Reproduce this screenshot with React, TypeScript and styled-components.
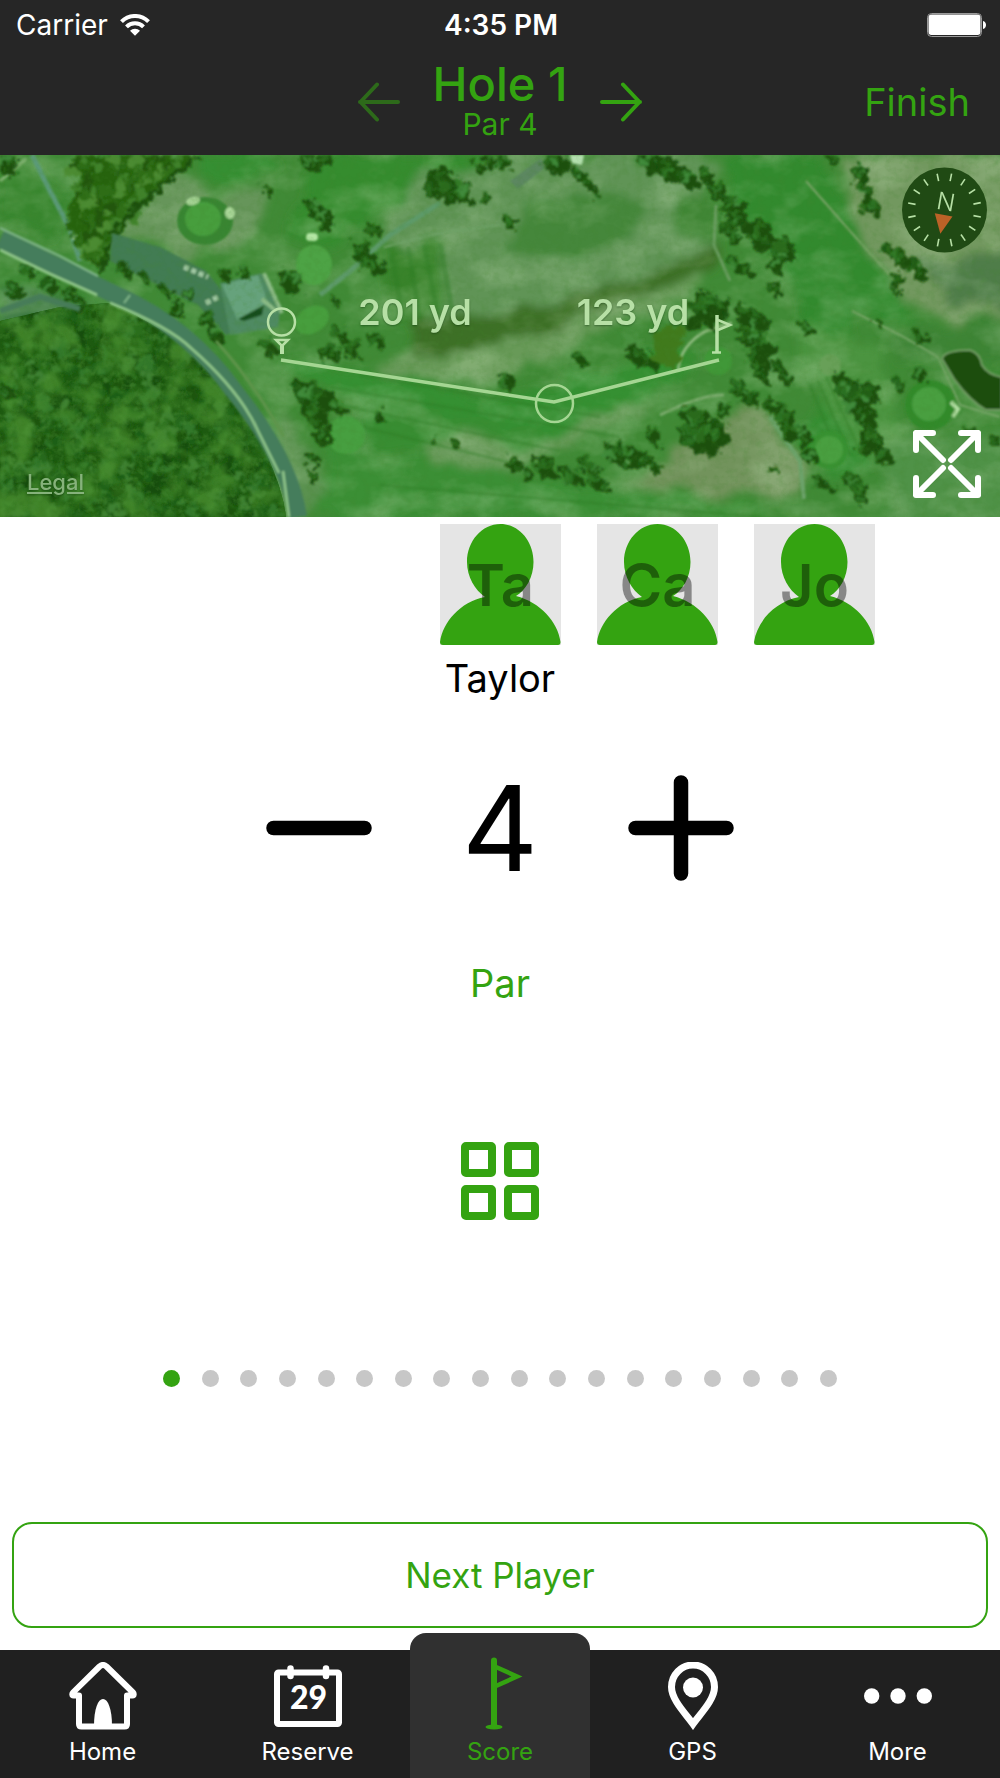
import React, { useState } from "react";
import styled, { createGlobalStyle } from "styled-components";

const GREEN = "#34a311";
const MARK = "#b7e0a6";

const GlobalStyle = createGlobalStyle`
  *, *::before, *::after { box-sizing: border-box; }
  body {
    margin: 0;
    background: #fff;
    font-family: Inter, "Liberation Sans", sans-serif;
    -webkit-font-smoothing: antialiased;
  }
  button {
    margin: 0;
    padding: 0;
    border: 0;
    background: none;
    font: inherit;
    color: inherit;
    cursor: pointer;
  }
  svg { display: block; }
`;

const Page = styled.div`
  display: flex;
  flex-direction: column;
  min-height: 100vh;
`;

const Header = styled.header`
  background: #262626;
  height: 155px;
`;

const StatusBar = styled.div`
  display: grid;
  grid-template-columns: 1fr auto 1fr;
  align-items: center;
  height: 50px;
  padding: 0 14px 0 16px;
  color: #fff;
  font-size: 28px;
  line-height: 36px;
`;

const Carrier = styled.div`
  display: flex;
  align-items: center;
  gap: 12px;
`;

const Clock = styled.time`
  font-weight: 600;
`;

const BatterySlot = styled.div`
  justify-self: end;
`;

const NavBar = styled.div`
  display: grid;
  grid-template-columns: 1fr auto 1fr;
  align-items: center;
  height: 104px;
  padding: 0 30px;
  color: ${GREEN};
`;

const HoleNav = styled.div`
  grid-column: 2;
  display: flex;
  align-items: center;
  gap: 32px;
`;

const HoleTitle = styled.div`
  display: flex;
  flex-direction: column;
  align-items: center;
  width: 136px;
`;

const HoleName = styled.h1`
  margin: 0;
  font-size: 47px;
  font-weight: 500;
  line-height: 44px;
  white-space: nowrap;
`;

const HolePar = styled.p`
  margin: 0;
  font-size: 30px;
  line-height: 36px;
`;

const ArrowButton = styled.button`
  &:disabled { opacity: 0.55; cursor: default; }
`;

const FinishButton = styled.button`
  justify-self: end;
  font-size: 38px;
  line-height: 48px;
`;

const MapPanel = styled.section`
  position: relative;
  height: 362px;
  overflow: hidden;
  background: #3f8434;
  > svg { width: 100%; height: 100%; }
`;

const LegalLink = styled.a`
  position: absolute;
  left: 27px;
  bottom: 21px;
  color: #86b27b;
  font-size: 22px;
  font-weight: 500;
  line-height: 28px;
  text-shadow: 0 1px 2px rgba(0, 40, 0, 0.4);
`;

const ExpandButton = styled.button`
  position: absolute;
  right: 19px;
  bottom: 19px;
`;

const Main = styled.main`
  flex: 1;
  display: flex;
  flex-direction: column;
  align-items: center;
`;

const Players = styled.div`
  align-self: stretch;
  display: flex;
  gap: 36px;
  padding: 7px 0 0 calc(50% - 60px);
  overflow: hidden;
`;

const PlayerTile = styled.button`
  display: grid;
  place-items: center;
  flex: none;
  width: 121px;
  height: 121px;
  background: #e5e5e5;
  > * { grid-area: 1 / 1; }
`;

const Initials = styled.span`
  color: rgba(0, 0, 0, 0.41);
  font-size: 58px;
  font-weight: 600;
  line-height: 72px;
`;

const PlayerName = styled.h2`
  margin: 9px 0 0;
  font-size: 38px;
  font-weight: 400;
  line-height: 48px;
  color: #000;
`;

const Stepper = styled.div`
  display: flex;
  align-items: center;
  justify-content: space-between;
  width: 468px;
  height: 144px;
  margin-top: 54px;
`;

const Score = styled.output`
  font-size: 118px;
  line-height: 144px;
  color: #000;
`;

const Result = styled.p`
  margin: 59px 0 0;
  color: ${GREEN};
  font-size: 38px;
  line-height: 48px;
`;

const GridButton = styled.button`
  display: grid;
  grid-template-columns: repeat(2, 35px);
  gap: 8px;
  margin-top: 135px;
`;

const GridCell = styled.span`
  height: 35px;
  border: 8px solid ${GREEN};
  border-radius: 5px;
`;

const Dots = styled.div`
  display: flex;
  justify-content: space-between;
  width: 674px;
  max-width: 90%;
  margin-top: 150px;
`;

const Dot = styled.button<{ $on: boolean }>`
  width: 17px;
  height: 17px;
  border-radius: 50%;
  background: ${(p) => (p.$on ? GREEN : "#c7c7c7")};
`;

const NextArea = styled.div`
  align-self: stretch;
  margin-top: auto;
  padding: 0 12px 22px;
`;

const NextButton = styled.button`
  width: 100%;
  height: 106px;
  border: 2px solid ${GREEN};
  border-radius: 20px;
  color: ${GREEN};
  font-size: 35px;
  line-height: 44px;
`;

const TabBar = styled.nav`
  display: flex;
  height: 128px;
  background: #202020;
  color: #fff;
`;

const Tab = styled.a<{ $active?: boolean }>`
  display: flex;
  flex-direction: column;
  align-items: center;
  justify-content: flex-end;
  flex: ${(p) => (p.$active ? "0 0 180px" : "1 1 0")};
  gap: 8px;
  margin-top: ${(p) => (p.$active ? "-17px" : "0")};
  padding-bottom: 12px;
  border-radius: ${(p) => (p.$active ? "16px 16px 0 0" : "0")};
  background: ${(p) => (p.$active ? "#303030" : "transparent")};
  color: ${(p) => (p.$active ? GREEN : "#fff")};
  font-size: 24px;
  line-height: 28px;
  text-decoration: none;
`;

const WifiIcon = () => (
  <svg width="30" height="22" viewBox="0 0 30 22" aria-hidden="true">
    <g fill="none" stroke="#fff" strokeWidth="4">
      <path d="M1.5 7.6a19 19 0 0 1 27 0" />
      <path d="M6.5 12.8a12 12 0 0 1 17 0" />
    </g>
    <path d="M10 16.8a7 7 0 0 1 10 0l-5 5z" fill="#fff" />
  </svg>
);

const BatteryIcon = () => (
  <svg width="59" height="24" viewBox="0 0 59 24" aria-label="Battery full">
    <rect x="0.5" y="0.5" width="54" height="23" rx="4" fill="none" stroke="#9a9a9a" />
    <rect x="1.500" y="1.500" width="52" height="20.500" rx="3" fill="#fff" />
    <path d="M56 8c4 1 4 7 0 8z" fill="#fff" />
  </svg>
);

const Arrow = ({ left }: { left?: boolean }) => (
  <svg width="42" height="40" viewBox="0 0 42 40" aria-hidden="true">
    <path
      d={left ? "M40 20H2M19 2.5L2.5 20L19 37.5" : "M2 20H40M23 2.5L39.500 20L23 37.5"}
      fill="none"
      stroke={GREEN}
      strokeWidth="4"
      strokeLinecap="round"
      strokeLinejoin="round"
    />
  </svg>
);

const Person = () => (
  <svg width="121" height="121" viewBox="0 0 121 121" aria-hidden="true">
    <path
      fill={GREEN}
      d="M60.500 0C79 0 93.500 17 93.500 38C93.500 53 86 66 76 72C100 78 118 98 120.500 118Q120.500 121 118 121H3Q0 121 0 118C3 98 20 78 45 73C35 66 27 53 27 38C27 17 42 0 60.500 0Z"
    />
  </svg>
);

const StepIcon = ({ plus }: { plus?: boolean }) => (
  <svg width="106" height="106" viewBox="0 0 106 106" aria-hidden="true">
    <path
      d={plus ? "M7.500 53H98.500M53 7.500V98.500" : "M7.500 53H98.500"}
      stroke="#000"
      strokeWidth="14.500"
      strokeLinecap="round"
    />
  </svg>
);

const ExpandIcon = () => (
  <svg width="68" height="68" viewBox="0 0 68 68" aria-hidden="true">
    <g fill="none" stroke="#fff" strokeWidth="6" strokeLinecap="round" strokeLinejoin="round">
      <path d="M3 20V3H20M3 3L30 30" />
      <path d="M48 3H65V20M65 3L38 30" />
      <path d="M3 48V65H20M3 65L30 38" />
      <path d="M48 65H65V48M65 65L38 38" />
    </g>
  </svg>
);

const HomeIcon = () => (
  <svg width="68" height="68" viewBox="0 0 68 68" aria-hidden="true">
    <path
      d="M10 33.500H4.500C3 33.500 3 31.500 4 30.500L30.500 4.500Q34 1.500 37.500 4.500L64 30.500C65 31.500 65 33.500 63.500 33.500H58V62Q58 64.500 55.500 64.500H12.500Q10 64.500 10 62Z"
      fill="none"
      stroke="#fff"
      strokeWidth="6"
      strokeLinejoin="round"
    />
    <path d="M25 64C25 47 29 37 34 37S43 47 43 64Z" fill="#fff" />
  </svg>
);

const CalendarIcon = () => (
  <svg width="68" height="68" viewBox="0 0 68 68" aria-hidden="true">
    <rect x="3" y="10.500" width="62" height="51.500" rx="1.500" fill="none" stroke="#fff" strokeWidth="6" />
    <path d="M16.500 6.500V14M52 6.500V14" stroke="#fff" strokeWidth="6.500" strokeLinecap="round" />
    <text
      x="34.500"
      y="47"
      textAnchor="middle"
      fill="#fff"
      fontFamily="Lato, sans-serif"
      fontSize="32"
      fontWeight="900"
    >
      29
    </text>
  </svg>
);

const FlagIcon = () => (
  <svg width="68" height="74" viewBox="0 0 68 74" aria-hidden="true">
    <ellipse cx="28" cy="71" rx="8.500" ry="2.500" fill={GREEN} />
    <path d="M28 4.500V70" stroke={GREEN} strokeWidth="6" strokeLinecap="round" />
    <path d="M30 11L51 20.500L30 30" fill="none" stroke={GREEN} strokeWidth="4.500" />
  </svg>
);

const PinIcon = () => (
  <svg width="68" height="68" viewBox="0 0 68 68" aria-hidden="true">
    <path
      d="M34 62C27 52 12.500 38 12.500 25A21.500 22 0 0 1 55.500 25C55.500 38 41 52 34 62Z"
      fill="none"
      stroke="#fff"
      strokeWidth="7"
    />
    <circle cx="34" cy="25.500" r="10" fill="#fff" />
  </svg>
);

const MoreIcon = () => (
  <svg width="68" height="68" viewBox="0 0 68 68" aria-hidden="true">
    <g fill="#fff">
      <circle cx="7.700" cy="34" r="7.700" />
      <circle cx="34" cy="34" r="7.700" />
      <circle cx="60.300" cy="34" r="7.700" />
    </g>
  </svg>
);

/* Small deterministic generator, so the tree canopy is the same on every render. */
const makeRandom = (seed: number) => () => {
  seed = (seed * 16807) % 2147483647;
  return seed / 2147483647;
};

type Blob = { x: number; y: number; r: number; c: string };

const rand = makeRandom(4127);
const canopy = ["#1f5f12", "#2a6e1a", "#1a540e", "#33782a", "#26681a", "#3c8030", "#184d0c"];
const woods: Blob[] = Array.from({ length: 1300 }, () => ({
  x: rand() * 300,
  y: 130 + rand() * 236,
  r: 2 + rand() * 5,
  c: canopy[Math.floor(rand() * canopy.length)],
}));
const grove: Blob[] = Array.from({ length: 260 }, () => ({
  x: 55 + rand() * 145,
  y: rand() * 120,
  r: 2 + rand() * 5,
  c: ["#2d6d18", "#3f822b", "#22570f", "#4c8b31"][Math.floor(rand() * 4)],
}));

/* Single trees and clumps: centre, and radius of the clump. */
const clumps: [number, number, number][] = [
  [8, 10, 10], [312, 8, 9], [326, 4, 7], [268, 34, 6], [314, 54, 10], [324, 64, 10], [432, 34, 9], [446, 30, 16],
  [461, 38, 12], [374, 76, 7], [362, 96, 9], [372, 110, 11], [290, 126, 11], [336, 149, 4], [340, 178, 8],
  [328, 198, 8], [352, 193, 9], [336, 199, 8], [378, 186, 8], [268, 192, 8], [478, 14, 7], [490, 8, 7],
  [504, 6, 8], [510, 68, 7], [486, 46, 5], [556, 8, 12], [578, 18, 8], [588, 28, 7], [595, 38, 4], [650, 8, 12],
  [668, 14, 13], [688, 24, 11], [707, 22, 7], [718, 38, 9], [732, 52, 13], [738, 64, 11], [727, 72, 7],
  [734, 82, 7], [738, 112, 9], [748, 116, 6], [762, 82, 15], [782, 94, 12], [777, 110, 9], [775, 134, 6],
  [710, 150, 14], [700, 156, 10], [720, 148, 9], [636, 200, 10], [648, 206, 9], [578, 202, 7], [586, 210, 5],
  [744, 160, 10], [756, 166, 12], [750, 182, 12], [764, 192, 10], [758, 206, 11], [762, 220, 8],
  [740, 236, 10], [750, 242, 8], [779, 214, 8], [786, 224, 6], [724, 254, 6], [695, 268, 15], [702, 282, 18],
  [716, 276, 13], [690, 282, 12], [306, 240, 14], [320, 244, 14], [316, 262, 13], [338, 252, 8], [322, 282, 8],
  [379, 260, 6], [312, 304, 7], [312, 320, 5], [434, 284, 4], [456, 290, 5], [5, 234, 9], [506, 228, 7],
  [651, 280, 7], [658, 290, 4], [616, 298, 11], [632, 302, 11], [646, 306, 8], [654, 314, 5], [514, 308, 7],
  [528, 320, 7], [546, 312, 10], [572, 322, 11], [588, 312, 9], [598, 326, 10], [606, 332, 6],
  [772, 252, 8], [784, 262, 10], [790, 276, 9], [802, 280, 9], [810, 302, 8], [820, 326, 7], [832, 332, 5],
  [850, 326, 8], [858, 336, 10], [864, 344, 6], [846, 232, 14], [858, 246, 15], [870, 238, 10], [866, 264, 10],
  [872, 284, 11], [884, 302, 9], [864, 294, 7], [806, 172, 6], [920, 182, 7], [878, 170, 4],
  [900, 232, 7], [920, 220, 8], [832, 4, 6], [860, 20, 9], [866, 36, 8], [872, 52, 9], [888, 94, 6],
  [900, 104, 10], [918, 116, 9], [898, 124, 6], [896, 134, 4], [968, 276, 6], [995, 286, 7], [776, 316, 3],
  [14, 134, 8], [28, 116, 7], [50, 130, 9], [70, 140, 8], [80, 148, 7], [224, 120, 7], [244, 118, 7],
  [206, 164, 8], [216, 180, 8], [178, 154, 8], [190, 140, 6], [166, 136, 6], [146, 124, 7], [124, 114, 8],
];
const leafColors = ["#2a6b1c", "#205d14", "#337a28", "#3f8a3a", "#2c6f20"];
const leaves: Blob[] = clumps.flatMap(([x, y, r]) =>
  Array.from({ length: 9 }, () => {
    const a = rand() * Math.PI * 2;
    const d = rand() * r * 0.75;
    return {
      x: x - r * 0.25 + Math.cos(a) * d,
      y: y - r * 0.25 + Math.sin(a) * d,
      r: r * (0.14 + rand() * 0.2),
      c: leafColors[Math.floor(rand() * leafColors.length)],
    };
  }),
);

const Blobs = ({ items }: { items: Blob[] }) => (
  <>
    {items.map((b, i) => (
      <circle key={i} cx={b.x.toFixed(1)} cy={b.y.toFixed(1)} r={b.r.toFixed(1)} fill={b.c} />
    ))}
  </>
);

const Shadows = () => (
  <g fill="#1a4f0c">
    {clumps.map(([x, y, r], i) => (
      <ellipse
        key={i}
        cx={x}
        cy={y}
        rx={(r * 1.25).toFixed(1)}
        ry={(r * 0.8).toFixed(1)}
        transform={`rotate(48 ${x} ${y})`}
      />
    ))}
  </g>
);

const Terrain = () => (
  <>
    <defs>
      <filter id="soft" x="-10%" y="-10%" width="120%" height="120%">
        <feTurbulence type="fractalNoise" baseFrequency="0.03" numOctaves="3" seed="5" result="n" />
        <feDisplacementMap in="SourceGraphic" in2="n" scale="30" xChannelSelector="R" yChannelSelector="G" />
        <feGaussianBlur stdDeviation="4" />
      </filter>
      <filter id="edge">
        <feGaussianBlur stdDeviation="0.8" />
      </filter>
      <filter id="ragged" x="0" y="0" width="100%" height="100%" filterUnits="userSpaceOnUse">
        <feTurbulence type="fractalNoise" baseFrequency="0.11" numOctaves="3" seed="11" result="n" />
        <feDisplacementMap in="SourceGraphic" in2="n" scale="18" xChannelSelector="R" yChannelSelector="G" />
        <feGaussianBlur stdDeviation="0.9" />
      </filter>
      <filter id="mottle" x="0" y="0" width="100%" height="100%">
        <feTurbulence type="fractalNoise" baseFrequency="0.02 0.03" numOctaves="4" seed="8" />
        <feColorMatrix values="0 0 0 0 0.5  0 0 0 0 0.68  0 0 0 0 0.42  2.4 0 0 0 -1" />
      </filter>
      <filter id="shade" x="0" y="0" width="100%" height="100%">
        <feTurbulence type="fractalNoise" baseFrequency="0.03" numOctaves="3" seed="21" />
        <feColorMatrix values="0 0 0 0 0.07  0 0 0 0 0.28  0 0 0 0 0.03  0 3.600 0 0 -1.500" />
      </filter>
      <filter id="grain" x="0" y="0" width="100%" height="100%">
        <feTurbulence type="fractalNoise" baseFrequency="0.14" numOctaves="3" seed="3" />
        <feColorMatrix values="0 0 0 0 0.06  0 0 0 0 0.24  0 0 0 0 0.03  0 2.2 0 0 -1" />
      </filter>
      <clipPath id="woodsClip">
        <path d="M0 166L60 152L108 148Q170 174 196 204Q240 246 262 290Q282 330 286 362H0Z" />
      </clipPath>
    </defs>

    <rect width="1000" height="362" fill="#408a36" />

    <g filter="url(#soft)">
      <path d="M200 0L202 20L240 30L290 0Z" fill="#358f30" />
      <path d="M178 10L200 26L210 44L270 28L262 66L240 92L180 100L150 86L118 80L134 50Z" fill="#66955a" />
      <path d="M0 0H30L70 46L60 80L0 66Z" fill="#39862e" />
      <path d="M330 0H490L440 24L380 56L330 92L290 80L300 40Z" fill="#358c2e" />
      <path d="M380 80L420 20L520 0H720L690 60L720 96L640 134L540 166L430 166L390 120Z" fill="#619457" />
      <path d="M520 50L620 36L650 60L630 86L560 106L500 96Z" fill="#44873a" />
      <path d="M680 40L716 50L712 84L676 78Z" fill="#3f8634" />
      <path d="M380 96L440 84L452 156L400 166Z" fill="#39832c" />
      <path d="M380 204L500 186L640 140L700 118L690 150L640 160L560 200L480 228L400 222Z" fill="#679a58" />
      <path d="M420 164Q600 150 722 84L716 110Q600 160 520 188L410 206Z" fill="#3c7026" />
      <path d="M282 204L380 214L500 244L660 194L700 200L650 240L560 278L470 290L300 220Z" fill="#359030" />
      <path d="M340 240L560 280L500 320L370 290Z" fill="#378d30" />
      <path d="M420 290L460 272L520 296L600 258L660 250L560 292L500 320L440 316Z" fill="#6b9b5c" />
      <path d="M330 290L560 330L700 346L800 362H310Z" fill="#3b8f34" />
      <path d="M670 300L736 252L764 258L806 306L800 338L700 342L620 326Z" fill="#72935c" />
      <path d="M716 0H820L850 60L890 110L920 170L860 160L840 210L800 180L790 120L740 60Z" fill="#328a2d" />
      <path d="M840 0H1010V170L940 160L890 130L856 80Z" fill="#72985f" />
      <path d="M920 106L1010 96V156L950 146Z" fill="#4f7d4a" />
      <path d="M880 176L1010 160V206L960 210L900 206Z" fill="#3c8435" />
      <path d="M800 170L850 180L880 200L900 290L860 300L830 250L800 220Z" fill="#4b9440" />
      <path d="M820 240L850 270L870 310L830 330L800 290Z" fill="#358e30" />
      <path d="M890 290L1010 280V370H880Z" fill="#4f9247" />
      <path d="M280 250L330 340L300 362H280Z" fill="#5a9150" />
      <path d="M0 130L60 140L100 150L0 180Z" fill="#3d7a42" />
    </g>

    <rect width="1000" height="362" filter="url(#mottle)" opacity="0.3" />

    <g stroke="#2b7a21" strokeWidth="5" opacity="0.35" filter="url(#edge)">
      <path d="M392 98L402 162M408 92L420 164M424 90L438 160M440 88L452 154" />
      <path d="M340 250L560 296M346 268L520 310M360 220L600 262M330 232L620 282M380 330L760 362" strokeWidth="3" />
      <path d="M810 230L838 300M818 226L850 300M826 222L862 300" strokeWidth="3" />
    </g>

    <g filter="url(#edge)" fill="none">
      <path d="M32 0L50 36L70 74L80 106" stroke="#5c9a78" strokeWidth="5" />
      <path d="M72 84L92 74M0 26L26 4" stroke="#86b677" strokeWidth="3" />
      <path d="M320 140L350 116L390 80L440 48" stroke="#5d9a69" strokeWidth="5" />
      <path d="M384 92L440 78L500 70" stroke="#6ea267" strokeWidth="2" />
      <path d="M806 26L850 76L890 120" stroke="#79a468" strokeWidth="2" />
      <path d="M852 156L900 180L938 202L960 250L1000 262" stroke="#75a466" strokeWidth="2" />
      <path d="M716 50L714 90L730 126" stroke="#6a9d61" strokeWidth="3" />
      <path d="M678 216Q680 190 706 176L732 168" stroke="#8cb97d" strokeWidth="3" />
      <path d="M660 260Q700 240 724 240" stroke="#7cac6e" strokeWidth="3" />
      <path d="M770 262L800 306L804 344" stroke="#6ca36a" strokeWidth="4" />
    </g>

    <g filter="url(#ragged)">
      <path d="M72 0H198L170 22L132 50L112 84L100 114L80 98L66 70L76 30Z" fill="#27640f" />
      <Blobs items={grove.filter((b) => b.x + b.y * 0.85 < 190 && b.x > 68 + b.y * 0.15)} />
      <path d="M196 2L152 40L128 58L112 88L100 120" fill="none" stroke="#1a4f0c" strokeWidth="6" />
    </g>
    <g clipPath="url(#woodsClip)">
      <rect y="130" width="300" height="232" fill="#1d5a10" />
      <g filter="url(#ragged)">
        <Blobs items={woods} />
      </g>
      <rect y="130" width="300" height="232" filter="url(#shade)" opacity="0.75" />
      <rect y="130" width="300" height="232" filter="url(#grain)" opacity="0.5" />
    </g>

    <g filter="url(#edge)">
      <path d="M112 78L160 92L206 116L222 136L248 172L226 180L198 150L110 106Z" fill="#437b52" />
      <path d="M220 128L262 118L280 156L278 172L230 180Z" fill="#4f8a62" />
      <path d="M222 130L258 120L268 148L238 166Z" fill="#66a27c" />
      <path d="M238 164L264 150L262 160L244 166Z" fill="#194d1b" />
      <path d="M264 118L282 158M262 144L276 156" stroke="#8cbb86" strokeWidth="4" />
      <path d="M184 112L208 122M206 148L218 142" stroke="#a2c9a4" strokeWidth="5" strokeDasharray="5 3" />
      <path d="M510 26L540 4L548 10L518 34Z" fill="#5b8760" />
      <path d="M570 0H584L582 10L572 8Z" fill="#b3dfae" />
    </g>

    <g filter="url(#edge)">
      <ellipse cx="205" cy="66" rx="28" ry="24" fill="#388530" />
      <ellipse cx="203" cy="64" rx="18" ry="17" fill="#479e3e" />
      <ellipse cx="193" cy="46" rx="7" ry="4" fill="#abd89a" transform="rotate(-15 193 46)" />
      <ellipse cx="230" cy="58" rx="5" ry="6" fill="#abd89a" />
      <rect x="306" y="78" width="12" height="8" rx="4" fill="#b4e6a4" />
      <ellipse cx="314" cy="110" rx="18" ry="20" fill="#4da344" />
      <ellipse cx="312" cy="165" rx="18" ry="13" fill="#469e3e" transform="rotate(-30 312 165)" />
      <circle cx="346" cy="280" r="19" fill="#479f40" />
      <circle cx="718" cy="206" r="14" fill="#409838" />
      <circle cx="829" cy="295" r="19" fill="#379230" />
      <circle cx="829" cy="295" r="14" fill="#489f40" />
      <circle cx="930" cy="250" r="25" fill="#328a2b" />
      <circle cx="929" cy="249" r="17" fill="#489f41" />
      <circle cx="830" cy="210" r="11" fill="#68a058" />
      <path d="M951 247L958 254L953 262" fill="none" stroke="#b0dca0" strokeWidth="4" />
    </g>

    {/* the noise averages one half, so the displaced layers keep their place */}
    <g filter="url(#ragged)">
      <circle cx="630" cy="186" r="10" fill="#4a9140" />
      <path d="M652 176L686 168L676 214L656 208Z" fill="#3f7a1b" />
      <path d="M690 160Q700 140 720 138Q732 146 726 166Q710 176 688 174Z" fill="#1a4f0c" />
      <Shadows />
      <Blobs items={leaves} />
    </g>

    <rect width="1000" height="362" filter="url(#grain)" opacity="0.22" />

    <g filter="url(#edge)" fill="none">
      <path
        d="M942 204Q944 195 970 195Q980 198 982 210Q988 220 1002 222V255H986Q970 246 954 224Z"
        fill="#1a4e0a"
        stroke="#719c63"
        strokeWidth="2"
      />
      <path d="M0 84L50 108L120 142Q190 174 234 236Q290 306 298 362" stroke="#457d5b" strokeWidth="18" />
      <path d="M0 73L60 101L98 121" stroke="#80b58b" strokeWidth="2" />
      <path
        d="M0 95L50 119L97 140M110 148Q170 172 192 194Q240 236 258 276L279 318M283 316L289 362"
        stroke="#91c78b"
        strokeWidth="2.500"
      />
      <path d="M216 186Q254 228 284 282" stroke="#5f944c" strokeWidth="3" />
      <path d="M0 156L40 142L80 154" stroke="#477b58" strokeWidth="6" />
      <path d="M124 148L130 140" stroke="#82b78a" strokeWidth="2" />
    </g>
  </>
);

const Compass = () => (
  <g transform="translate(944.500 55)">
    <circle r="42.500" fill="#204a14" />
    <g stroke={MARK} strokeWidth="1.600">
      {Array.from({ length: 16 }, (_, i) => (
        <path key={i} d="M0 -37V-29.500" transform={`rotate(${i * 22.5 + 11})`} />
      ))}
    </g>
    <g transform="rotate(10)">
      <text x="0" y="0" textAnchor="middle" fill={MARK} fontFamily="Inter, sans-serif" fontSize="24" fontWeight="300">
        N
      </text>
      <path d="M-9 5H9L0 24Z" fill="#bb6227" />
    </g>
  </g>
);

const HoleMap = () => (
  <svg viewBox="0 0 1000 362" preserveAspectRatio="xMidYMid slice" role="img" aria-label="Hole 1 from above">
    <Terrain />
    <g fill="none" stroke="#a5d693" strokeWidth="3.500">
      <path d="M281 205L554 247L719 205" />
      <circle cx="554.500" cy="248.500" r="18.500" strokeWidth="2.500" />
    </g>
    <g fill="none" stroke={MARK} strokeWidth="2.500">
      <circle cx="281.500" cy="167" r="13.500" />
      <path d="M276 185H288L282 191Z" />
      <path d="M282 190V199" strokeWidth="4" />
      <path d="M717 160V197" strokeWidth="3.500" />
      <path d="M712 197.500H721M718 165L730 170L718 175" />
    </g>
    <g
      fill={MARK}
      fontFamily="Inter, sans-serif"
      fontSize="36"
      fontWeight="600"
      textAnchor="middle"
      style={{ textShadow: "0 1px 2px rgba(0, 40, 0, 0.4)" }}
    >
      <text x="415" y="170">201 yd</text>
      <text x="633" y="170">123 yd</text>
    </g>
    <Compass />
  </svg>
);

const PLAYERS = ["Taylor", "Casey", "Jordan"];
const HOLES = Array.from({ length: 18 }, (_, i) => i + 1);
const PAR = 4;

const resultName = (score: number) => {
  const names: Record<string, string> = { "-2": "Eagle", "-1": "Birdie", "0": "Par", "1": "Bogey" };
  const diff = score - PAR;
  return names[String(diff)] ?? (diff > 0 ? `+${diff}` : String(diff));
};

export default function App() {
  const [hole, setHole] = useState(1);
  const [player, setPlayer] = useState(0);
  const [score, setScore] = useState(PAR);

  return (
    <Page>
      <GlobalStyle />
      <Header>
        <StatusBar>
          <Carrier>
            Carrier
            <WifiIcon />
          </Carrier>
          <Clock>4:35 PM</Clock>
          <BatterySlot>
            <BatteryIcon />
          </BatterySlot>
        </StatusBar>
        <NavBar>
          <HoleNav>
            <ArrowButton aria-label="Previous hole" disabled={hole === 1} onClick={() => setHole(hole - 1)}>
              <Arrow left />
            </ArrowButton>
            <HoleTitle>
              <HoleName>Hole {hole}</HoleName>
              <HolePar>Par {PAR}</HolePar>
            </HoleTitle>
            <ArrowButton aria-label="Next hole" disabled={hole === 18} onClick={() => setHole(hole + 1)}>
              <Arrow />
            </ArrowButton>
          </HoleNav>
          <FinishButton>Finish</FinishButton>
        </NavBar>
      </Header>

      <MapPanel>
        <HoleMap />
        <LegalLink href="#legal">Legal</LegalLink>
        <ExpandButton aria-label="Expand map">
          <ExpandIcon />
        </ExpandButton>
      </MapPanel>

      <Main>
        <Players>
          {PLAYERS.map((name, i) => (
            <PlayerTile key={name} aria-label={name} onClick={() => setPlayer(i)}>
              <Person />
              <Initials>{name.slice(0, 2)}</Initials>
            </PlayerTile>
          ))}
        </Players>
        <PlayerName>{PLAYERS[player]}</PlayerName>

        <Stepper>
          <button aria-label="One stroke less" onClick={() => setScore(Math.max(1, score - 1))}>
            <StepIcon />
          </button>
          <Score>{score}</Score>
          <button aria-label="One stroke more" onClick={() => setScore(score + 1)}>
            <StepIcon plus />
          </button>
        </Stepper>
        <Result>{resultName(score)}</Result>

        <GridButton aria-label="Scorecard">
          <GridCell />
          <GridCell />
          <GridCell />
          <GridCell />
        </GridButton>

        <Dots>
          {HOLES.map((n) => (
            <Dot key={n} $on={n === hole} aria-label={`Hole ${n}`} onClick={() => setHole(n)} />
          ))}
        </Dots>

        <NextArea>
          <NextButton onClick={() => setPlayer((player + 1) % PLAYERS.length)}>Next Player</NextButton>
        </NextArea>
      </Main>

      <TabBar>
        <Tab href="#home">
          <HomeIcon />
          Home
        </Tab>
        <Tab href="#reserve">
          <CalendarIcon />
          Reserve
        </Tab>
        <Tab href="#score" $active aria-current="page">
          <FlagIcon />
          Score
        </Tab>
        <Tab href="#gps">
          <PinIcon />
          GPS
        </Tab>
        <Tab href="#more">
          <MoreIcon />
          More
        </Tab>
      </TabBar>
    </Page>
  );
}
